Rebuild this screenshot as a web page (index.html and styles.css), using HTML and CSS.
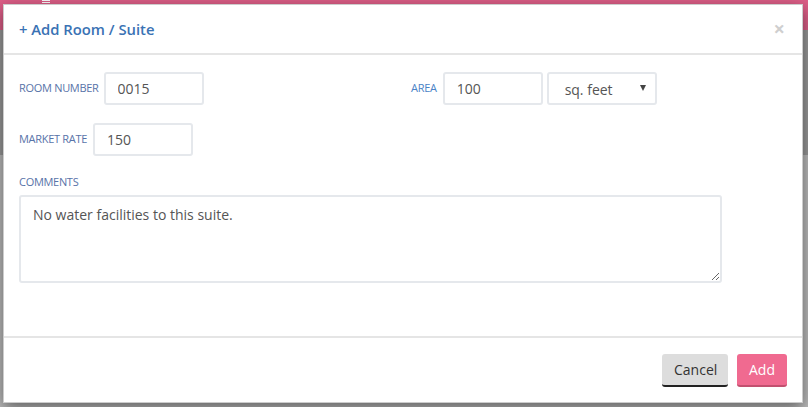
FILE: index.html
```html
<!DOCTYPE html>
<html>
<head>
<meta charset="utf-8">
<link rel="stylesheet" href="styles.css">
</head>
<body>
<div class="backdrop">
  <div class="topbar"><span class="menu"></span></div>
</div>
<div class="modal">
  <div class="modal-header">
    <h4 class="modal-title">+ Add Room / Suite</h4>
    <span class="close">×</span>
  </div>
  <div class="modal-body">
    <div class="row">
      <div class="group col-left">
        <label class="lbl">ROOM NUMBER</label>
        <input class="field w100" type="text" value="0015">
      </div>
      <div class="group col-right">
        <label class="lbl">AREA</label>
        <input class="field w100" type="text" value="100">
        <div class="select-wrap">
          <select class="field select"><option>sq. feet</option></select>
        </div>
      </div>
    </div>
    <div class="row">
      <div class="group">
        <label class="lbl lbl-rate">MARKET RATE</label>
        <input class="field w100" type="text" value="150">
      </div>
    </div>
    <div class="comments">
      <label class="lbl block">COMMENTS</label>
      <textarea class="field area">No water facilities to this suite.</textarea>
    </div>
  </div>
  <div class="modal-footer">
    <button class="btn btn-cancel">Cancel</button>
    <button class="btn btn-add">Add</button>
  </div>
</div>
</body>
</html>
```
FILE: styles.css
```css
html, body {
  margin: 0;
  padding: 0;
}
body {
  width: 808px;
  height: 407px;
  overflow: hidden;
  background: #9c9c9c;
  font-family: "Open Sans", "Liberation Sans", sans-serif;
  position: relative;
}
.backdrop {
  position: absolute;
  inset: 0;
  background: linear-gradient(#9a9a9a 0 155px, #bdbdbd 155px);
}
.topbar {
  height: 30px;
  background: #de5f88;
  position: relative;
}
.menu {
  position: absolute;
  left: 42px;
  top: 0;
  width: 8px;
  height: 1px;
  background: #fff;
  box-shadow: 0 2px 0 #fff;
}
.modal {
  position: absolute;
  left: 3px;
  top: 4px;
  width: 798px;
  background: #fff;
  border: 1px solid rgba(0,0,0,0.2);
  box-shadow: 0 5px 15px rgba(0,0,0,0.5);
}
.modal-header {
  padding: 14px 15px;
  border-bottom: 2px solid #e5e5e5;
  display: flex;
  align-items: center;
  justify-content: space-between;
}
.modal-title {
  margin: 0;
  font-size: 14.8px;
  line-height: 20px;
  font-weight: 600;
  color: #3a72b4;
}
.close {
  font-size: 20px;
  line-height: 20px;
  font-weight: 700;
  color: #cfcfcf;
  margin-right: 2px;
}
.modal-body {
  padding: 17px 15px 53px;
}
.row {
  display: flex;
  margin-bottom: 18px;
}
.group {
  display: flex;
  align-items: center;
}
.col-left {
  width: 392px;
}
.lbl {
  font-size: 11px;
  color: #5873a8;
  margin-right: 5px;
  margin-top: -3px;
  letter-spacing: -0.3px;
}
.lbl-rate {
  margin-right: 6px;
}
.col-right .lbl {
  color: #4a83c6;
  margin-right: 6px;
}
.field {
  box-sizing: border-box;
  height: 33px;
  border: 2px solid #e5e8ec;
  border-radius: 3px;
  font-family: "Open Sans", "Liberation Sans", sans-serif;
  font-size: 14px;
  color: #555;
  padding: 0 12px;
  background: #fff;
  outline: none;
}
.w100 {
  width: 100px;
}
.select-wrap {
  position: relative;
  margin-left: 4px;
}
.select {
  width: 110px;
  appearance: none;
  -webkit-appearance: none;
  padding-left: 16px;
  padding-top: 1px;
}
.select-wrap::after {
  content: "";
  position: absolute;
  right: 11px;
  top: 13px;
  border-left: 3.5px solid transparent;
  border-right: 3.5px solid transparent;
  border-top: 6px solid #444;
}
.comments {
  margin-top: 1px;
}
.block {
  display: block;
  margin: 0 0 6px;
}
.area {
  display: block;
  width: 703px;
  height: 88px;
  padding: 8px 12px;
  line-height: 20px;
  resize: both;
}
.modal-footer {
  border-top: 2px solid #e5e5e5;
  padding: 16px 15px 15px;
  display: flex;
  justify-content: flex-end;
  gap: 9px;
}
.btn {
  height: 33px;
  box-sizing: border-box;
  border: none;
  border-radius: 3px;
  font-family: "Open Sans", "Liberation Sans", sans-serif;
  font-size: 14px;
  padding: 0 12px;
}
.btn-cancel {
  width: 66px;
  background: #dddddd;
  color: #333;
  border-bottom: 2px solid #222;
}
.btn-add {
  width: 50px;
  background: #f06a90;
  color: #fff;
  border-bottom: 2px solid #c2506f;
}
```
